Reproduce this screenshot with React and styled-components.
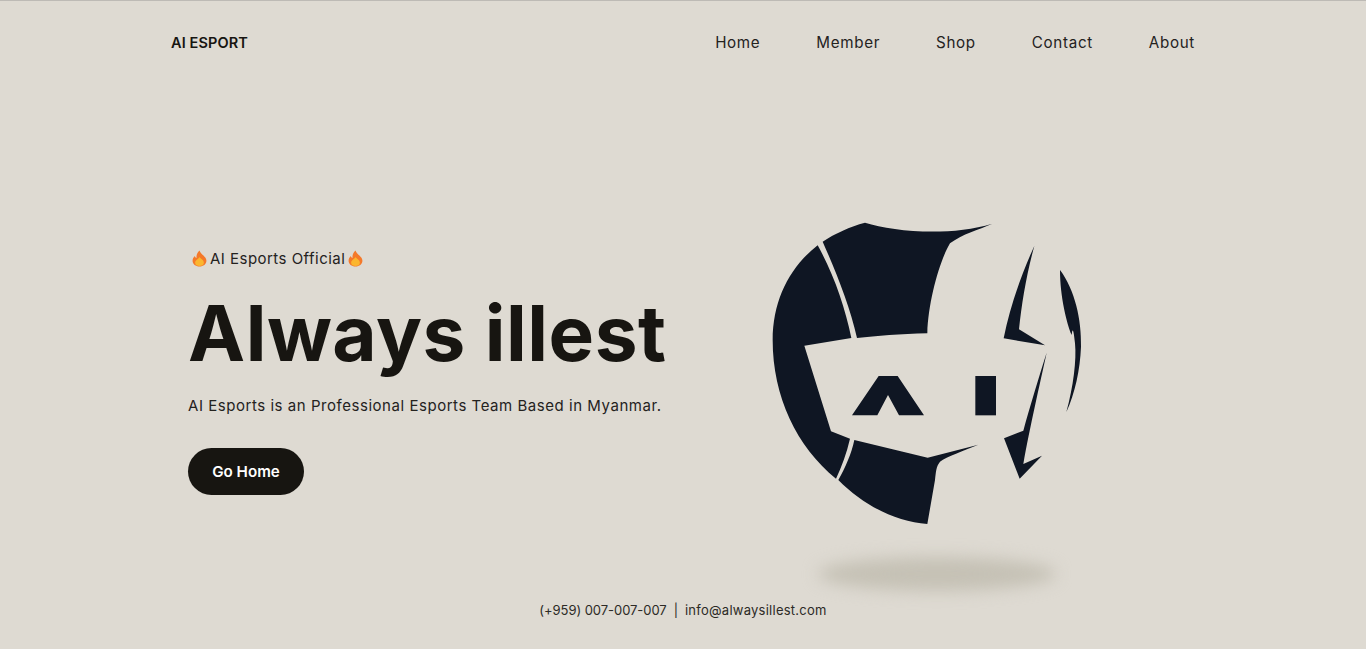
import React from "react";
import styled, { createGlobalStyle } from "styled-components";

const Global = createGlobalStyle`
  html, body { margin: 0; padding: 0; background: #dedad2; }
  body { font-family: "Inter", "Liberation Sans", sans-serif; color: #171511; }
`;

const Page = styled.div`
  height: 649px;
  box-sizing: border-box;
  border-top: 1px solid #bdbab5;
  overflow: hidden;
  display: flex;
  flex-direction: column;
  background: #dedad2;
`;

const Nav = styled.nav`
  width: 1024px;
  height: 82px;
  margin: 0 auto;
  flex: none;
  display: flex;
  align-items: center;
  justify-content: space-between;
`;

const Brand = styled.div`
  font-size: 14.5px;
  font-weight: 600;
  letter-spacing: 0.12px;
`;

const NavLinks = styled.div`
  display: flex;
  gap: 56px;
`;

const NavLink = styled.a`
  font-size: 15.2px;
  letter-spacing: 0.66px;
  color: #24221e;
`;

const Hero = styled.main`
  width: 1024px;
  margin: 0 auto;
  padding: 127px 0 0 17px;
  box-sizing: border-box;
  display: flex;
  align-items: flex-start;
`;

const Copy = styled.section`
  width: 562px;
  padding-top: 38px;
  flex: none;
`;

const Tagline = styled.div`
  display: flex;
  align-items: center;
  gap: 3px;
  margin-left: 4px;
  height: 20px;
  font-size: 15px;
  letter-spacing: 0.47px;
  color: #24221e;
`;

const Title = styled.h1`
  margin: 21px 0 0;
  font-size: 76.5px;
  line-height: 88px;
  font-weight: 700;
  letter-spacing: 0.55px;
  color: #171511;
  white-space: nowrap;
`;

const Lead = styled.p`
  margin: 17px 0 0;
  font-size: 15px;
  line-height: 24px;
  letter-spacing: 0.54px;
  color: #24221e;
  white-space: nowrap;
`;

const Cta = styled.button`
  display: block;
  margin-top: 30px;
  width: 116px;
  height: 47px;
  border: 0;
  border-radius: 24px;
  background: #171511;
  color: #fff;
  font: 600 15.2px "Inter", sans-serif;
`;

const Art = styled.figure`
  margin: 0;
  display: flex;
  flex-direction: column;
  align-items: flex-start;
`;

const Logo = styled.svg`
  display: block;
  width: 350px;
  height: 330px;
`;

const Shadow = styled.div`
  width: 238px;
  height: 34px;
  margin: 17px 0 0 68px;
  border-radius: 50%;
  background: #c5c1b5;
  filter: blur(8px);
`;

const Footer = styled.footer`
  margin-top: auto;
  padding-bottom: 31px;
  text-align: center;
  font-size: 13px;
  line-height: 16px;
  color: #2c2a26;
`;

const Contact = styled.span`
  letter-spacing: ${(p) => p.$spacing};
`;

const Sep = styled.span`
  margin: 0 7px;
`;

const FlameIcon = styled.svg`
  display: block;
  flex: none;
  width: 15px;
  height: 17px;
`;

const Flame = () => (
  <FlameIcon viewBox="1.500 0 13 17" preserveAspectRatio="none" aria-hidden="true">
    <path fill="#f4792a" d="M8 .5c.6 2.400 2 3.500 3.400 5 1.300 1.500 2.600 3 2.600 5.200C14 14 11.300 16.500 8 16.500S2 14 2 10.700c0-2 .9-3.500 2-4.700.2 1 .6 1.700 1.400 2.100C5.200 5.200 6 2.500 8 .5z" />
    <path fill="#fbb62f" d="M8 7c.5 1.400 3.800 2.900 3.800 5.800 0 2.100-1.700 3.200-3.800 3.200s-3.800-1.100-3.800-3.200C4.200 10.100 7.400 8.800 8 7z" />
  </FlameIcon>
);

const AiLogo = () => (
  <Logo viewBox="0 0 1050 990" role="img" aria-label="AI Esports logo">
    <g fill="#0f1623">
      <path d="M218 95 C255 70 300 50 345 38 C430 65 600 80 727 41 C690 58 635 72 600 100 C570 150 535 270 532 370 C450 372 380 378 321 384 C300 290 260 190 218 95Z" />
      <path d="M203 106 C250 190 285 290 304 384 L163 407 L243 664 L300 686 C290 730 275 770 258 806 C140 710 68 560 68 390 C68 270 120 170 203 106Z" />
      <path d="M313 690 L533 743 L685 704 C640 722 590 740 570 755 C558 770 558 785 555 810 L532 942 C440 935 345 890 265 810 C285 775 305 730 313 690Z" />
      <path d="M386 498 L443 498 L522 616 L447 616 L414 555 L382 616 L306 616Z" />
      <rect x="676" y="498" width="62" height="118" />
      <path d="M853 108 C830 190 815 280 807 358 L885 406 L761 385 C780 290 815 190 853 108Z" />
      <path d="M890 428 C870 520 840 650 820 762 L876 737 L809 806 L762 685 L820 662 C840 590 870 490 890 428Z" />
      <path d="M930 180 C975 240 995 330 993 410 C990 480 975 550 949 606 C970 530 980 450 975 400 C972 370 968 345 965 375 C950 340 930 260 930 180Z" />
    </g>
  </Logo>
);

export default function App() {
  return (
    <Page>
      <Global />
      <Nav>
        <Brand>AI ESPORT</Brand>
        <NavLinks>
          <NavLink>Home</NavLink>
          <NavLink>Member</NavLink>
          <NavLink>Shop</NavLink>
          <NavLink>Contact</NavLink>
          <NavLink>About</NavLink>
        </NavLinks>
      </Nav>
      <Hero>
        <Copy>
          <Tagline><Flame />AI Esports Official<Flame /></Tagline>
          <Title>Always illest</Title>
          <Lead>AI Esports is an Professional Esports Team Based in Myanmar.</Lead>
          <Cta>Go Home</Cta>
        </Copy>
        <Art>
          <AiLogo />
          <Shadow />
        </Art>
      </Hero>
      <Footer>
        <Contact $spacing="-0.05px">(+959) 007-007-007</Contact>
        <Sep>|</Sep>
        <Contact $spacing="0.25px">info@alwaysillest.com</Contact>
      </Footer>
    </Page>
  );
}
